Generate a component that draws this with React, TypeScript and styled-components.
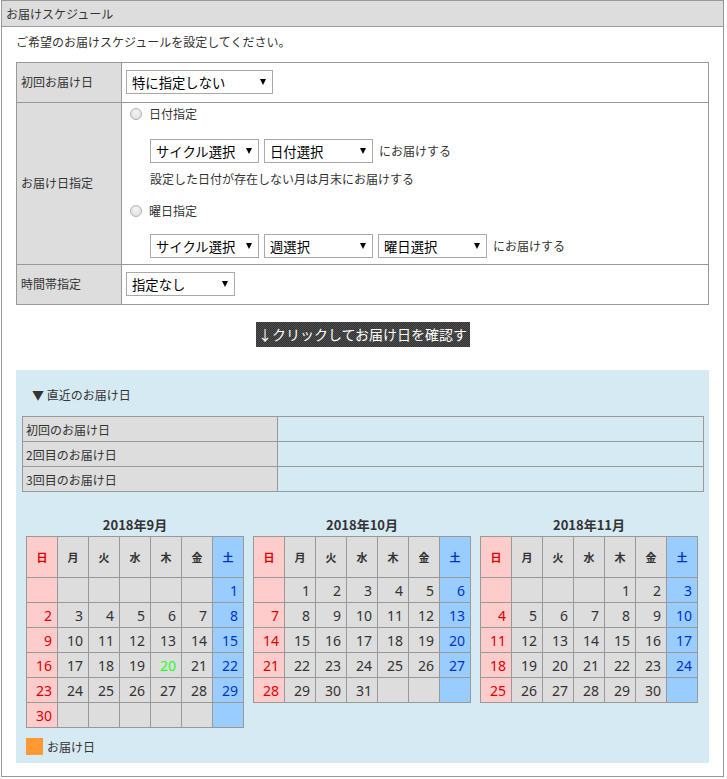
import React from 'react';
import styled, { createGlobalStyle, css } from 'styled-components';

const GlobalStyle = createGlobalStyle`
  body {
    margin: 0;
    background: #fff;
    color: #333;
    font-family: 'Noto Sans CJK JP', 'Noto Sans', sans-serif;
    font-size: 12px;
  }
`;

const Box = styled.section`
  width: 723px;
  margin: 0 0 0 1px;
  box-sizing: border-box;
  border: 1px solid #999;
`;

const BoxHeader = styled.h2`
  margin: 0;
  height: 25px;
  line-height: 25px;
  padding-left: 4px;
  background: #ddd;
  border-bottom: 1px solid #999;
  font-size: 12px;
  font-weight: normal;
  color: #333;
`;

const BoxBody = styled.div`
  padding: 0 14px 13px;
`;

const Intro = styled.p`
  margin: 0 0 10px;
  padding-top: 5px;
  line-height: 20px;
`;

const FormTable = styled.table`
  width: 100%;
  border-collapse: collapse;
  border: 1px solid #999;

  th,
  td {
    border: 1px solid #999;
  }
`;

const LabelCell = styled.th`
  width: 96px;
  padding: 0 4px 2px;
  background: #ddd;
  font-weight: normal;
  text-align: left;
  color: #333;
`;

const ValueCell = styled.td<{ $tall?: boolean }>`
  padding: ${({ $tall }) => ($tall ? '1px 4px 6px' : '7px 4px 8px')};
  vertical-align: top;
`;

const SelectWrap = styled.span<{ $w: number }>`
  position: relative;
  display: inline-block;
  flex: none;
  width: ${({ $w }) => $w}px;
  height: 24px;

  &::after {
    content: '';
    position: absolute;
    top: 9px;
    right: 7px;
    border-left: 3px solid transparent;
    border-right: 3px solid transparent;
    border-top: 6px solid #000;
    pointer-events: none;
  }
`;

const SelectBox = styled.select`
  appearance: none;
  display: block;
  width: 100%;
  height: 100%;
  box-sizing: border-box;
  margin: 0;
  padding: 0 18px 0 5px;
  border: 1px solid #a9a9a9;
  border-radius: 0;
  background: #fff;
  color: #000;
  font-family: inherit;
  font-size: 13.33px;
`;

const RadioLine = styled.label<{ $gap: number }>`
  display: flex;
  align-items: center;
  gap: 7px;
  margin: ${({ $gap }) => $gap}px 0 0 4px;
  line-height: 20px;
`;

const RadioDot = styled.input`
  appearance: none;
  width: 12px;
  height: 12px;
  margin: 0;
  border: 1px solid #b4b4b4;
  border-radius: 50%;
  background: radial-gradient(circle at 50% 40%, #f6f6f6 0, #e2e2e2 70%, #d4d4d4 100%);
`;

const SelectRow = styled.div<{ $gap: number }>`
  display: flex;
  align-items: center;
  gap: 5px;
  margin: ${({ $gap }) => $gap}px 0 0 24px;
`;

const RowText = styled.span`
  margin-left: 1px;
  line-height: 20px;
`;

const Note = styled.div`
  margin: 6px 0 0 24px;
  line-height: 20px;
`;

const ConfirmButton = styled.button`
  display: block;
  width: 214px;
  height: 25px;
  margin: 17px auto 0;
  padding: 0;
  border: 0;
  color: #fff;
  font-family: inherit;
  font-size: 14px;
  line-height: 25px;
  background: repeating-conic-gradient(#333 0 25%, #505050 0 50%) 0 0 / 2px 2px;
`;

const RecentPanel = styled.div`
  margin-top: 23px;
  padding: 15px 0 8px;
  background: #d6eaf3;
`;

const PanelTitle = styled.div`
  margin-bottom: 11px;
  padding-left: 16px;
  line-height: 20px;
`;

const DateTable = styled.table`
  width: calc(100% - 11px);
  margin: 0 5px 0 6px;
  border-collapse: collapse;
  border: 1px solid #999;

  th,
  td {
    height: 24px;
    padding: 0 3px;
    border: 1px solid #999;
  }

  th {
    width: 248px;
    background: #ddd;
    font-weight: normal;
    text-align: left;
  }
`;

const Calendars = styled.div`
  display: flex;
  align-items: flex-start;
  gap: 9px;
  margin-top: 24px;
  padding: 0 10px;
`;

const CalendarBlock = styled.div`
  width: 218px;
`;

const CalendarTitle = styled.div`
  margin-bottom: 2px;
  line-height: 18px;
  font-size: 13px;
  font-weight: bold;
  text-align: center;
`;

const CalendarTable = styled.table`
  width: 218px;
  border-collapse: collapse;
  table-layout: fixed;
`;

type DayKind = 'sun' | 'sat' | 'week';

const dayBg: Record<DayKind, string> = { sun: '#fcc', sat: '#9cf', week: '#ddd' };
const dayFg: Record<DayKind, string> = { sun: '#d00', sat: '#03c', week: '#333' };

const WeekHead = styled.th<{ $kind: DayKind }>`
  height: 40px;
  padding: 0;
  border: 1px solid #999;
  background: ${({ $kind }) => dayBg[$kind]};
  color: ${({ $kind }) => dayFg[$kind]};
  font-size: 11px;
  font-weight: bold;
  text-align: center;
`;

const DayCell = styled.td<{ $kind: DayKind; $today?: boolean }>`
  height: 24px;
  padding: 0 5px 0 0;
  border: 1px solid #999;
  background: ${({ $kind }) => dayBg[$kind]};
  color: ${({ $kind }) => dayFg[$kind]};
  font-family: 'Noto Sans', sans-serif;
  font-size: 14px;
  text-align: right;
  ${({ $today }) =>
    $today &&
    css`
      color: #2f2;
    `}
`;

const Legend = styled.div`
  display: flex;
  align-items: center;
  gap: 4px;
  margin-top: 10px;
  padding-left: 10px;
  line-height: 17px;
`;

const Swatch = styled.span`
  width: 17px;
  height: 17px;
  background: #f93;
`;

const WEEKDAYS = ['日', '月', '火', '水', '木', '金', '土'];

const kindOf = (i: number): DayKind => (i === 0 ? 'sun' : i === 6 ? 'sat' : 'week');

function weeksOf(year: number, month: number): (number | null)[][] {
  const first = new Date(year, month - 1, 1).getDay();
  const days = new Date(year, month, 0).getDate();
  const cells: (number | null)[] = [];
  for (let i = 0; i < first; i++) cells.push(null);
  for (let d = 1; d <= days; d++) cells.push(d);
  while (cells.length % 7) cells.push(null);
  const weeks = [];
  for (let i = 0; i < cells.length; i += 7) weeks.push(cells.slice(i, i + 7));
  return weeks;
}

const TODAY = { year: 2018, month: 9, day: 20 };

function Calendar({ year, month }: { year: number; month: number }) {
  return (
    <CalendarBlock>
      <CalendarTitle>
        {year}年{month}月
      </CalendarTitle>
      <CalendarTable>
        <thead>
          <tr>
            {WEEKDAYS.map((w, i) => (
              <WeekHead key={w} $kind={kindOf(i)}>
                {w}
              </WeekHead>
            ))}
          </tr>
        </thead>
        <tbody>
          {weeksOf(year, month).map((week, wi) => (
            <tr key={wi}>
              {week.map((d, i) => (
                <DayCell
                  key={i}
                  $kind={kindOf(i)}
                  $today={year === TODAY.year && month === TODAY.month && d === TODAY.day}
                >
                  {d ?? ''}
                </DayCell>
              ))}
            </tr>
          ))}
        </tbody>
      </CalendarTable>
    </CalendarBlock>
  );
}

function Select({ width, label }: { width: number; label: string }) {
  return (
    <SelectWrap $w={width}>
      <SelectBox defaultValue="">
        <option value="">{label}</option>
      </SelectBox>
    </SelectWrap>
  );
}

export default function App() {
  return (
    <>
      <GlobalStyle />
      <Box>
        <BoxHeader>お届けスケジュール</BoxHeader>
        <BoxBody>
          <Intro>ご希望のお届けスケジュールを設定してください。</Intro>
          <FormTable>
            <tbody>
              <tr>
                <LabelCell>初回お届け日</LabelCell>
                <ValueCell>
                  <Select width={147} label="特に指定しない" />
                </ValueCell>
              </tr>
              <tr>
                <LabelCell>お届け日指定</LabelCell>
                <ValueCell $tall>
                  <RadioLine $gap={0}>
                    <RadioDot type="radio" name="deliveryType" />
                    日付指定
                  </RadioLine>
                  <SelectRow $gap={15}>
                    <Select width={109} label="サイクル選択" />
                    <Select width={109} label="日付選択" />
                    <RowText>にお届けする</RowText>
                  </SelectRow>
                  <Note>設定した日付が存在しない月は月末にお届けする</Note>
                  <RadioLine $gap={12}>
                    <RadioDot type="radio" name="deliveryType" />
                    曜日指定
                  </RadioLine>
                  <SelectRow $gap={13}>
                    <Select width={109} label="サイクル選択" />
                    <Select width={109} label="週選択" />
                    <Select width={109} label="曜日選択" />
                    <RowText>にお届けする</RowText>
                  </SelectRow>
                </ValueCell>
              </tr>
              <tr>
                <LabelCell>時間帯指定</LabelCell>
                <ValueCell>
                  <Select width={109} label="指定なし" />
                </ValueCell>
              </tr>
            </tbody>
          </FormTable>

          <ConfirmButton type="button">↓クリックしてお届け日を確認する</ConfirmButton>

          <RecentPanel>
            <PanelTitle>▼ 直近のお届け日</PanelTitle>
            <DateTable>
              <tbody>
                <tr>
                  <th>初回のお届け日</th>
                  <td />
                </tr>
                <tr>
                  <th>2回目のお届け日</th>
                  <td />
                </tr>
                <tr>
                  <th>3回目のお届け日</th>
                  <td />
                </tr>
              </tbody>
            </DateTable>
            <Calendars>
              <Calendar year={2018} month={9} />
              <Calendar year={2018} month={10} />
              <Calendar year={2018} month={11} />
            </Calendars>
            <Legend>
              <Swatch />
              お届け日
            </Legend>
          </RecentPanel>
        </BoxBody>
      </Box>
    </>
  );
}
